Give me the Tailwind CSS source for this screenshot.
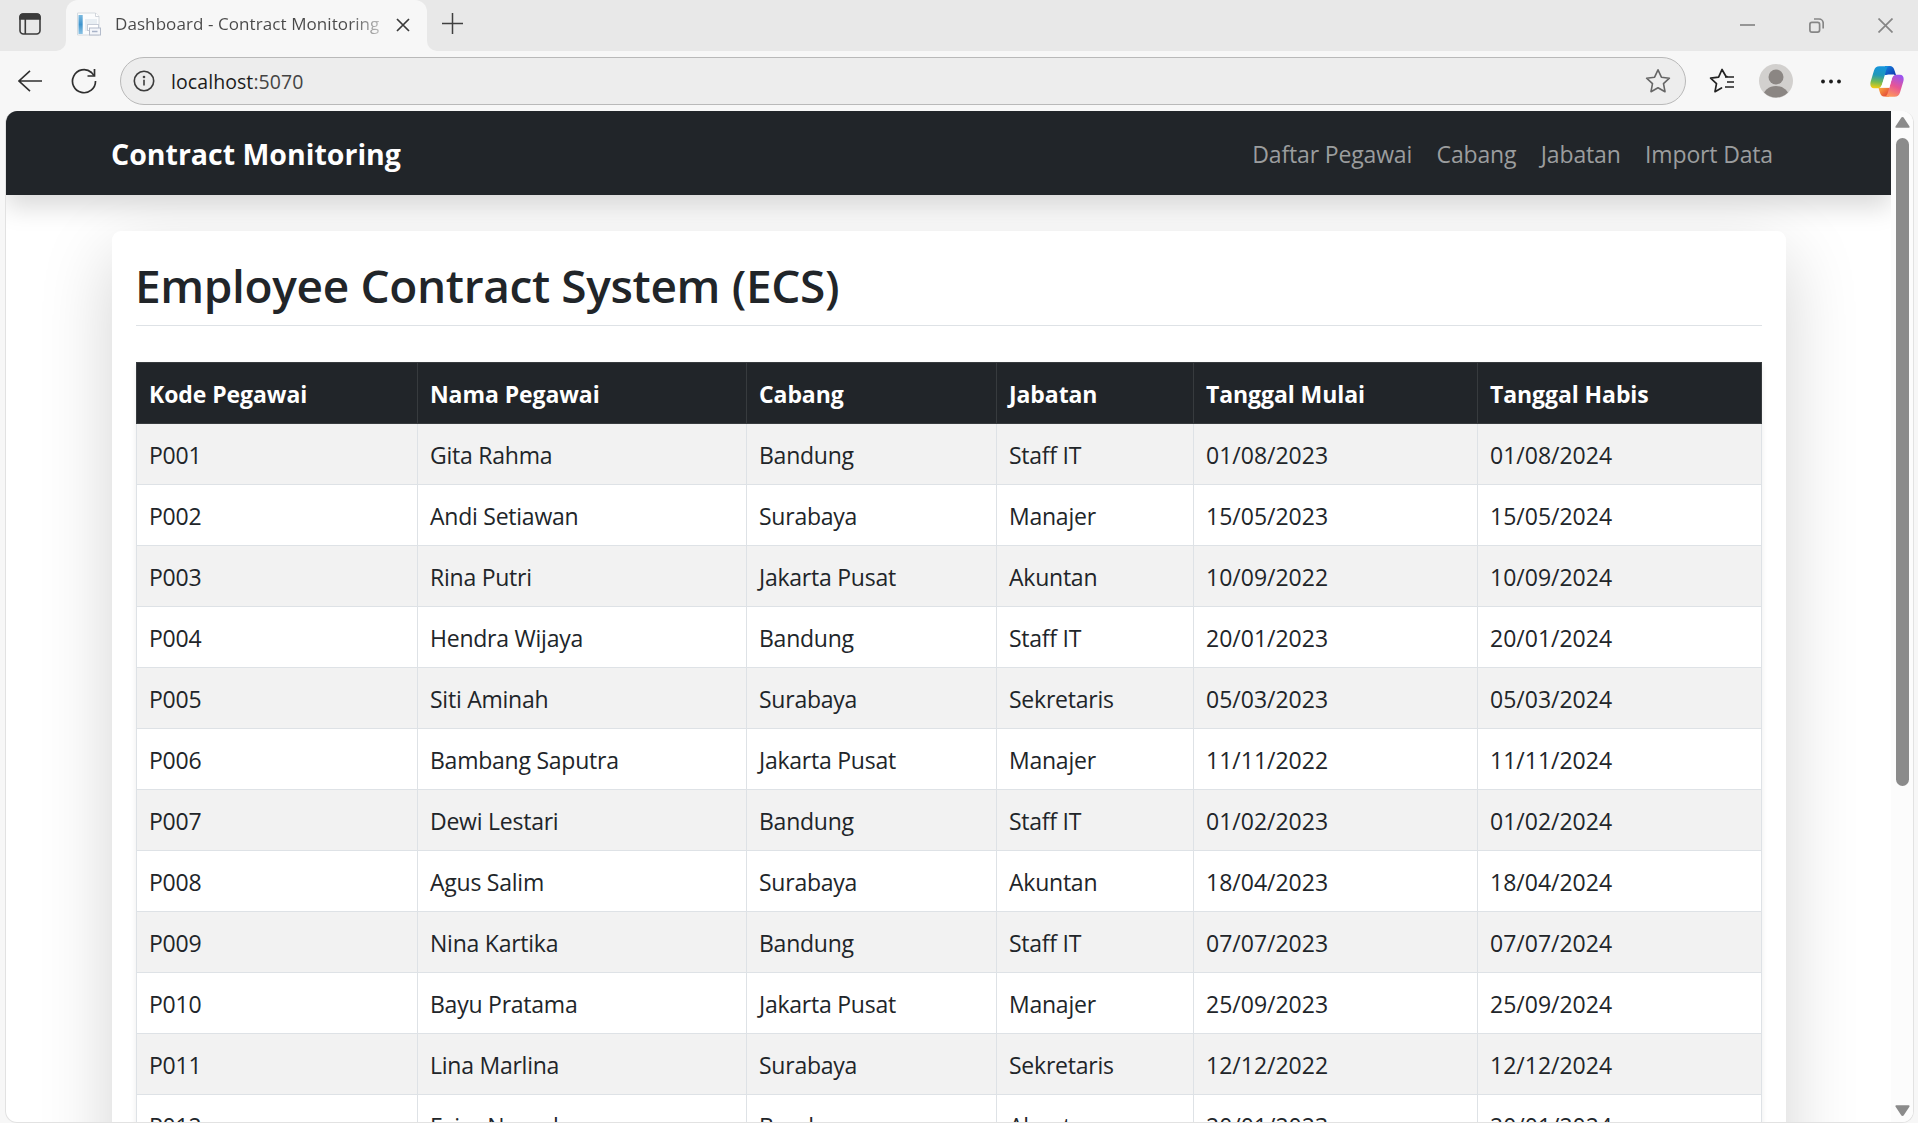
<!DOCTYPE html>
<html lang="id">
<head>
<meta charset="utf-8">
<title>Dashboard - Contract Monitoring</title>
<script src="https://cdn.jsdelivr.net/npm/@tailwindcss/browser@4"></script>
</head>
<body class="w-[1918px] h-[1123px] overflow-hidden flex flex-col bg-[#f7f7f7] font-['Open_Sans',sans-serif] text-[#212529]">

<!-- Tab strip -->
<div class="flex h-[51px] shrink-0">
  <div class="w-[66px] bg-[#e8e8e8] rounded-br-[10px] pl-[19px] pt-[13px]">
    <svg class="size-[22px]" viewBox="0 0 22 22" fill="none" stroke="#3b3b3b" stroke-width="1.6"><rect x="1" y="1" width="20" height="20" rx="3.5"/><path d="M1 6V4a3 3 0 0 1 3-3h14a3 3 0 0 1 3 3v2z" fill="#3b3b3b"/><path d="M6.3 6v15"/></svg>
  </div>
  <div class="w-[361px] bg-[#e8e8e8]">
    <div class="flex h-full bg-[#f7f7f7] rounded-t-[12px] pl-[11px]">
      <svg class="size-[24px] mt-[12px] shrink-0" viewBox="0 0 24 24">
        <defs><linearGradient id="bl" x1="0" y1="0" x2="0" y2="1"><stop offset="0" stop-color="#7ab9df"/><stop offset=".5" stop-color="#3f94cd"/><stop offset="1" stop-color="#8cc3e4"/></linearGradient></defs>
        <path d="M.5 1h18l3.500 3.500V23H.5z" fill="#fbfcfd" stroke="#d5dbe0"/>
        <path d="M18.500 1v3.500H22" fill="#fff" stroke="#c6ccd3" stroke-width=".8"/>
        <rect x="1.500" y="3" width="4.200" height="19" fill="url(#bl)"/>
        <rect x="8" y="7" width="12" height="12" fill="#e8eef3"/>
        <rect x="10.500" y="12.500" width="11" height="6" fill="#fff" stroke="#c7cdd8"/>
        <rect x="12.500" y="16" width="11" height="7" fill="#f4f6fa" stroke="#b4bccb"/>
        <path d="M15 19.500h5.500" stroke="#a8b3c8" stroke-width="1.500"/>
      </svg>
      <span class="w-[266px] ml-[14px] shrink-0 whitespace-nowrap overflow-hidden text-[17px] leading-[48px] tracking-[0.080px] bg-gradient-to-r from-[#484848] from-88% to-[#484848]/30 bg-clip-text text-transparent">Dashboard - Contract Monitoring</span>
      <svg class="size-[14px] mt-[18px] ml-[15px] shrink-0" viewBox="0 0 14 14" stroke="#3a3a3a" stroke-width="1.700"><path d="M1 1l12 12M13 1L1 13"/></svg>
    </div>
  </div>
  <div class="flex-1 flex justify-between bg-[#e8e8e8] rounded-bl-[10px] pl-[15px] pr-[25px]">
    <svg class="size-[21px] mt-[13px]" viewBox="0 0 21 21" stroke="#3f3f3f" stroke-width="1.500"><path d="M10.500 0v21M0 10.500h21"/></svg>
    <div class="flex gap-[54px] pt-[18px]">
      <svg class="size-[15px]" viewBox="0 0 15 15" stroke="#868686" stroke-width="1.700"><path d="M0 7h15"/></svg>
      <svg class="size-[15px]" viewBox="0 0 15 15" fill="none" stroke="#868686" stroke-width="1.700"><rect x=".9" y="4.400" width="9.700" height="9.700" rx="2"/><path d="M5 1h5a4.200 4.200 0 0 1 4.200 4.200V10.500"/></svg>
      <svg class="size-[15px]" viewBox="0 0 15 15" stroke="#868686" stroke-width="1.700"><path d="M.5.5l14 14M14.500.5l-14 14"/></svg>
    </div>
  </div>
</div>

<!-- Toolbar -->
<div class="flex items-center h-[60px] shrink-0 pl-[18px] pr-[14px]">
  <svg class="w-[24px] h-[22px]" viewBox="0 0 24 22" fill="none" stroke="#303030" stroke-width="1.600"><path d="M24 11H1M12 .8L1 11l11 10.200"/></svg>
  <svg class="size-[26px] ml-[29px]" viewBox="0 0 26 26" fill="none" stroke="#303030" stroke-width="1.700"><path d="M24.500 13A11.500 11.500 0 1 1 20.500 4.500L23 7.500"/><path d="M23.500 1v7h-7"/></svg>
  <div class="flex items-center w-[1566px] h-[48px] ml-[23px] rounded-full border-[1.500px] border-[#b9b9b9] bg-[#ededed] pl-[12px] pr-[14px]">
    <svg class="size-[22px]" viewBox="0 0 22 22" fill="none" stroke="#3c3c3c" stroke-width="1.600"><circle cx="11" cy="11" r="9.700"/><path d="M11 9.800v5.700"/><circle cx="11" cy="7" r=".5"/></svg>
    <span class="ml-[16px] pt-px text-[19.500px] tracking-[0.080px] text-[#1b1b1b]">localhost<span class="text-[#444]">:5070</span></span>
    <svg class="size-[26px] ml-auto" viewBox="0 0 26 26" fill="none" stroke="#666" stroke-width="1.600" stroke-linejoin="round"><path d="M13 1.800l3.400 7.400 8 1-5.900 5.500 1.500 8L13 19.800l-7 3.900 1.500-8L1.600 10.200l8-1z"/></svg>
  </div>
  <svg class="w-[26px] h-[26px] ml-[23px]" viewBox="0 0 26 26" fill="none" stroke="#222" stroke-width="1.700" stroke-linejoin="round" stroke-linecap="round"><path d="M18 8.500h-1L13 1.500 9.600 9.200l-8 1 5.900 5.500-1.500 8L12.500 20"/><path d="M16 9h9M18 14h7M16 19h9" stroke-linecap="butt"/></svg>
  <svg class="size-[34px] ml-[24px]" viewBox="0 0 34 34"><defs><clipPath id="av"><circle cx="17" cy="17" r="16.500"/></clipPath></defs><circle cx="17" cy="17" r="17" fill="#d2d0ce"/><g clip-path="url(#av)" fill="#8b8683"><circle cx="17" cy="13" r="7.500"/><ellipse cx="17" cy="33" rx="13" ry="11"/></g></svg>
  <svg class="w-[20px] h-[6px] ml-[28px]" viewBox="0 0 20 6" fill="#1c1c1c"><circle cx="2" cy="3.500" r="1.900"/><circle cx="10" cy="3.500" r="1.900"/><circle cx="18" cy="3.500" r="1.900"/></svg>
  <svg class="w-[34px] h-[31px] ml-auto" viewBox="0 0 34 31">
    <defs>
      <linearGradient id="c1" x1=".4" y1="0" x2=".3" y2="1"><stop offset="0" stop-color="#1595dd"/><stop offset=".4" stop-color="#2098b8"/><stop offset=".72" stop-color="#76bb50"/><stop offset="1" stop-color="#f5cc10"/></linearGradient>
      <linearGradient id="c2" x1=".7" y1="0" x2=".3" y2="1"><stop offset="0" stop-color="#9b54f0"/><stop offset=".5" stop-color="#e75595"/><stop offset="1" stop-color="#ff9a58"/></linearGradient>
      <linearGradient id="c3" x1="0" y1="0" x2="1" y2="1"><stop offset="0" stop-color="#1683e0"/><stop offset="1" stop-color="#1137ad"/></linearGradient>
      <linearGradient id="c4" x1="0" y1="0" x2="1" y2="1"><stop offset="0" stop-color="#ffb13d"/><stop offset="1" stop-color="#df3b3a"/></linearGradient>
    </defs>
    <path d="M15 0h5c2 0 3.500 1.300 4.200 3.600L26 9h-11z" fill="url(#c3)"/>
    <path d="M19 30.500h-5c-2 0-3.300-1.500-4-3.700L8.300 21.500H19z" fill="url(#c4)"/>
    <path d="M9.500.3H20c-2 0-3 1.200-3.600 3.200L12 18.500c-.8 2.500-2.200 3.700-4.500 3.700H4C.8 22.200-.3 19 .7 15.500L4 4.500C5 1.500 6.500.3 9.500.3z" fill="url(#c1)"/>
    <path d="M24.500 30.700H14c2 0 3-1.200 3.600-3.200L22 12.500c.8-2.500 2.200-3.700 4.500-3.700H30c3.200 0 4.300 3.200 3.300 6.700l-3.300 11c-1 3-2.500 4.200-5.500 4.200z" fill="url(#c2)"/>
    <path d="M18.500 8.500H24.500c-1.300.8-2 2-2.500 3.600L19.300 21.800H9.600c1.300-.8 2-2 2.400-3.300L14.600 11c.7-1.700 2-2.500 3.900-2.500z" fill="#fff"/>
  </svg>
</div>

<!-- Page viewport -->
<div class="flex w-[1909px] h-[1012px] ml-[5px] shrink-0 rounded-[12px] overflow-hidden border-x border-b border-[#e2e2e2] bg-white">
  <div class="w-[1885px] h-full overflow-hidden">
    <nav class="relative flex items-center justify-between h-[84px] bg-[#212529] pl-[105px] pr-[118px] pt-[3px] shadow-[0_12px_24px_rgba(0,0,0,0.15)]">
      <span class="text-[28.500px] font-bold text-white">Contract Monitoring</span>
      <div class="flex gap-[24.500px] text-[23px] tracking-[-0.160px] text-[#9b9d9e] whitespace-nowrap">
        <a>Daftar Pegawai</a><a>Cabang</a><a>Jabatan</a><a>Import Data</a>
      </div>
    </nav>
    <main class="w-[1674px] h-[1100px] mt-[36px] ml-[106px] rounded-[9px] bg-white px-[24px] pt-[24px] shadow-[0_24px_72px_rgba(0,0,0,0.175)]">
      <h1 class="h-[71px] border-b border-[#dee2e6] text-[46px] leading-[60px] font-semibold tracking-[-0.360px] -indent-px">Employee Contract System (ECS)</h1>
      <table class="mt-[36px] w-[1626px] table-fixed border-collapse text-[23px] leading-[36px] shadow-[0_3px_6px_rgba(0,0,0,0.075)]">
        <colgroup><col class="w-[281px]"><col class="w-[329px]"><col class="w-[250px]"><col class="w-[197px]"><col class="w-[284px]"><col></colgroup>
        <thead>
          <tr class="h-[61px] bg-[#212529] text-left text-white tracking-[-0.080px] [&>th]:border [&>th]:border-[#373b3e] [&>th]:px-[12px] [&>th]:pt-[2px]">
            <th>Kode Pegawai</th><th>Nama Pegawai</th><th>Cabang</th><th>Jabatan</th><th>Tanggal Mulai</th><th>Tanggal Habis</th>
          </tr>
        </thead>
        <tbody id="rows"></tbody>
      </table>
    </main>
  </div>
  <!-- Scrollbar -->
  <div class="flex-1 flex flex-col items-center bg-[#fcfcfc] pt-[6px] pb-[6px] pl-px">
    <svg class="w-[15px] h-[11px]" viewBox="0 0 15 11" fill="#8b8b8b"><path d="M6.200.8a1.500 1.500 0 0 1 2.600 0l5.600 8.400c.6 1-.1 1.600-.9 1.600h-12c-.8 0-1.500-.6-.9-1.600z"/></svg>
    <div class="w-[13px] h-[648px] mt-[10px] rounded-full bg-[#8b8b8b]"></div>
    <svg class="w-[15px] h-[11px] mt-auto" viewBox="0 0 15 11" fill="#8b8b8b"><path d="M6.200 10.200a1.500 1.500 0 0 0 2.600 0l5.600-8.400c.6-1-.1-1.600-.9-1.600h-12C.7.2 0 .8.600 1.800z"/></svg>
  </div>
</div>

<script>
const rows = [
  ["P001","Gita Rahma","Bandung","Staff IT","01/08/2023","01/08/2024"],
  ["P002","Andi Setiawan","Surabaya","Manajer","15/05/2023","15/05/2024"],
  ["P003","Rina Putri","Jakarta Pusat","Akuntan","10/09/2022","10/09/2024"],
  ["P004","Hendra Wijaya","Bandung","Staff IT","20/01/2023","20/01/2024"],
  ["P005","Siti Aminah","Surabaya","Sekretaris","05/03/2023","05/03/2024"],
  ["P006","Bambang Saputra","Jakarta Pusat","Manajer","11/11/2022","11/11/2024"],
  ["P007","Dewi Lestari","Bandung","Staff IT","01/02/2023","01/02/2024"],
  ["P008","Agus Salim","Surabaya","Akuntan","18/04/2023","18/04/2024"],
  ["P009","Nina Kartika","Bandung","Staff IT","07/07/2023","07/07/2024"],
  ["P010","Bayu Pratama","Jakarta Pusat","Manajer","25/09/2023","25/09/2024"],
  ["P011","Lina Marlina","Surabaya","Sekretaris","12/12/2022","12/12/2024"],
  ["P012","Fajar Nugroho","Bandung","Akuntan","20/01/2023","20/01/2024"]
];
document.getElementById('rows').innerHTML = rows.map(r =>
  '<tr class="h-[61px] odd:bg-[#f2f2f2] bg-white">' + r.map((c, i) =>
    '<td class="border border-[#dee2e6] px-[12px] pt-[2px] ' + (i < 4 ? 'tracking-[-0.240px]' : '') + '">' + c + '</td>').join('') + '</tr>').join('');
</script>
</body>
</html>
